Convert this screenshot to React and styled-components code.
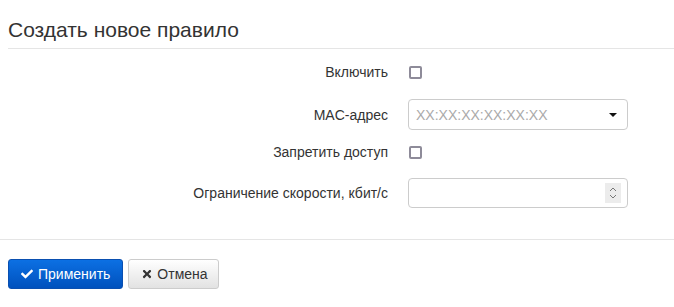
import React from 'react';
import styled, { createGlobalStyle } from 'styled-components';
import { FaCheck, FaTimes } from 'react-icons/fa';

const GlobalStyle = createGlobalStyle`
  body {
    margin: 0;
    background: #fff;
    font-family: "Liberation Sans", Arial, sans-serif;
    color: #333;
  }
`;

export default function App() {
  return (
    <Page>
      <GlobalStyle />
      <Title>Создать новое правило</Title>

      <Form>
        <Row top={13} height={20}>
          <Label>Включить</Label>
          <Checkbox type="checkbox" />
        </Row>
        <Row top={17} height={31}>
          <Label>MAC-адрес</Label>
          <SelectBox>
            <Placeholder>XX:XX:XX:XX:XX:XX</Placeholder>
            <Caret />
          </SelectBox>
        </Row>
        <Row top={12} height={20}>
          <Label>Запретить доступ</Label>
          <Checkbox type="checkbox" />
        </Row>
        <Row top={16} height={30}>
          <Label>Ограничение скорости, кбит/с</Label>
          <NumberBox>
            <Spinner>
              <svg width="8" height="14" viewBox="0 0 8 14">
                <path d="M1 5 L4 2 L7 5" fill="none" stroke="#777" strokeWidth="1" />
                <path d="M1 9 L4 12 L7 9" fill="none" stroke="#777" strokeWidth="1" />
              </svg>
            </Spinner>
          </NumberBox>
        </Row>
      </Form>

      <Footer>
        <Button primary>
          <FaCheck size={12} />
          Применить
        </Button>
        <Button>
          <FaTimes size={12} />
          Отмена
        </Button>
      </Footer>
    </Page>
  );
}

const Page = styled.div`
  width: 674px;
`;

const Title = styled.h3`
  margin: 0 0 0 8px;
  padding: 18px 0 7px;
  font-size: 21px;
  font-weight: normal;
  line-height: 23px;
  color: #333;
  border-bottom: 1px solid #e5e5e5;
`;

const Form = styled.div`
  display: flex;
  flex-direction: column;
  padding-bottom: 31px;
  border-bottom: 1px solid #e5e5e5;
`;

const Row = styled.div`
  display: grid;
  grid-template-columns: 388px 220px;
  column-gap: 20px;
  align-items: center;
  margin-top: ${p => p.top}px;
  height: ${p => p.height}px;
`;

const Label = styled.label`
  text-align: right;
  font-size: 14px;
  color: #333;
`;

const Checkbox = styled.input`
  appearance: none;
  margin: 0 0 0 1px;
  width: 13px;
  height: 13px;
  border: 2px solid #8e8b99;
  border-radius: 2px;
  background: #fff;
`;

const SelectBox = styled.div`
  box-sizing: border-box;
  height: 31px;
  border: 1px solid #ccc;
  border-radius: 4px;
  display: flex;
  align-items: center;
  justify-content: space-between;
  padding: 0 10px 0 7px;
`;

const Placeholder = styled.span`
  font-size: 14px;
  color: #aaa;
`;

const Caret = styled.span`
  width: 0;
  height: 0;
  border-left: 4px solid transparent;
  border-right: 4px solid transparent;
  border-top: 4px solid #111;
  margin-top: 1px;
`;

const NumberBox = styled.div`
  box-sizing: border-box;
  height: 30px;
  border: 1px solid #ccc;
  border-radius: 4px;
  display: flex;
  align-items: center;
  justify-content: flex-end;
  padding-right: 6px;
`;

const Spinner = styled.div`
  width: 16px;
  height: 20px;
  background: #ececec;
  display: flex;
  align-items: center;
  justify-content: center;
`;

const Footer = styled.div`
  display: flex;
  gap: 5px;
  padding: 19px 8px 0;
`;

const Button = styled.button`
  display: inline-flex;
  align-items: center;
  gap: ${p => (p.primary ? 5 : 4)}px;
  height: 30px;
  padding: ${p => (p.primary ? '0 12px' : '0 10px 0 12px')};
  font-family: "Liberation Sans", Arial, sans-serif;
  font-size: 14px;
  border-radius: 3px;
  border: 1px solid ${p => (p.primary ? '#0a4fb0' : '#ccc')};
  color: ${p => (p.primary ? '#fff' : '#333')};
  background: ${p =>
    p.primary
      ? 'linear-gradient(to bottom, #0c70e3, #0051bd)'
      : 'linear-gradient(to bottom, #ffffff, #e2e2e2)'};
`;
